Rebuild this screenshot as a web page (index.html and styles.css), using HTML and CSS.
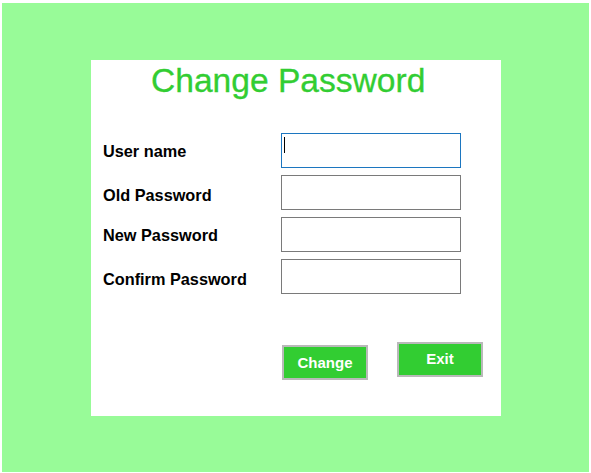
FILE: index.html
```html
<!DOCTYPE html>
<html lang="en">
<head>
<meta charset="utf-8">
<title>Change Password</title>
<link rel="stylesheet" href="styles.css">
</head>
<body>
<div class="frame">
  <div class="panel">
    <h1 class="title">Change Password</h1>
    <form class="form">
      <label class="label" for="user">User name</label>
      <div class="field-wrap">
        <input class="field field-focus" id="user" type="text">
        <span class="caret"></span>
      </div>
      <label class="label label-low" for="old">Old Password</label>
      <input class="field" id="old" type="password">
      <label class="label" for="new">New Password</label>
      <input class="field" id="new" type="password">
      <label class="label label-low" for="confirm">Confirm Password</label>
      <input class="field" id="confirm" type="password">
    </form>
    <div class="actions">
      <button class="btn btn-change" type="button">Change</button>
      <button class="btn btn-exit" type="button">Exit</button>
    </div>
  </div>
</div>
</body>
</html>
```

FILE: styles.css
```css
html, body {
  margin: 0;
  padding: 0;
  background: #ffffff;
}

body {
  width: 591px;
  height: 473px;
  overflow: hidden;
  font-family: "Liberation Sans", Arial, sans-serif;
}

.frame {
  margin: 3px 2px 0 2px;
  height: 469px;
  background: #98fb98;
  padding-top: 57px;
  padding-left: 89px;
  box-sizing: border-box;
}

.panel {
  width: 410px;
  height: 356px;
  background: #ffffff;
  box-sizing: border-box;
  padding-top: 1px;
}

.title {
  margin: 0;
  padding-left: 60px;
  font-size: 33.6px;
  line-height: 40px;
  font-weight: normal;
  color: #32cd32;
  -webkit-text-stroke: 0.3px #32cd32;
}

.form {
  margin: 32px 0 0 12px;
  display: grid;
  grid-template-columns: 178px 180px;
  grid-auto-rows: 35px;
  row-gap: 7px;
  align-items: center;
}

.label {
  font-size: 16.3px;
  font-weight: bold;
  color: #000000;
  padding-top: 2px;
}

.label-low {
  padding-top: 5px;
}

.field-wrap {
  position: relative;
  height: 35px;
}

.field {
  display: block;
  width: 180px;
  height: 35px;
  box-sizing: border-box;
  margin: 0;
  border: 1px solid #7a7a7a;
  background: #ffffff;
  outline: none;
  padding: 0 4px;
  font-family: "Liberation Sans", Arial, sans-serif;
  font-size: 15px;
}

.field-focus {
  border-color: #1c76c0;
}

.caret {
  position: absolute;
  left: 3px;
  top: 4px;
  width: 1px;
  height: 16px;
  background: #000000;
}

.actions {
  margin: 48px 0 0 191px;
  display: flex;
  align-items: flex-start;
  gap: 29px;
}

.btn {
  width: 86px;
  height: 35px;
  box-sizing: border-box;
  margin: 0;
  padding: 0;
  background: #32cd32;
  border: 2px solid #b9b9b9;
  color: #ffffff;
  font-family: "Liberation Sans", Arial, sans-serif;
  font-size: 15px;
  font-weight: bold;
  cursor: pointer;
}

.btn-change {
  margin-top: 3px;
}

.btn-exit {
  padding-bottom: 3px;
}
```
